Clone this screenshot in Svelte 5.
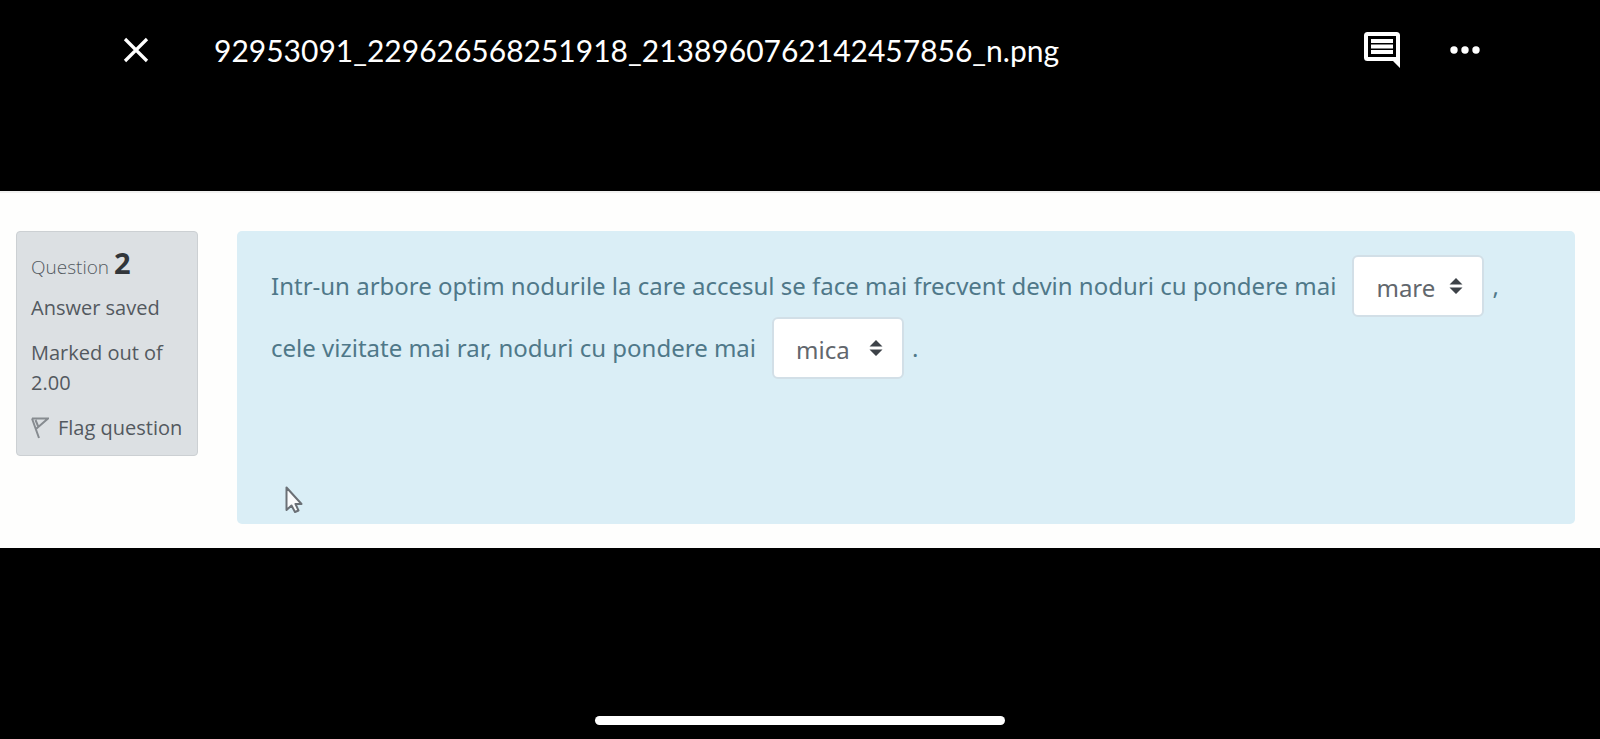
<script>
  let first = $state('mare');
  let second = $state('mica');
  const choices = ['mare', 'mica'];
  const fileName = '92953091_229626568251918_2138960762142457856_n.png';
</script>

{#snippet arrows()}
  <svg class="arrows" viewBox="0 0 14 18" aria-hidden="true">
    <path d="M0.5 7.500 7 1l6.500 6.500zM0.500 10.500h13L7 17z" fill="#3d4248" />
  </svg>
{/snippet}

<div class="viewer">
  <header>
    <button type="button" class="icon" aria-label="Close">
      <svg width="28" height="28" viewBox="0 0 28 28">
        <path d="M3 3l22 22M25 3L3 25" stroke="#fff" stroke-width="3.200" fill="none" />
      </svg>
    </button>
    <h1>{fileName}</h1>
    <button type="button" class="icon" aria-label="Comments">
      <svg width="36" height="36" viewBox="0 0 36 36" fill="#fff">
        <path fill-rule="evenodd" d="M3.500 0h29A3.500 3.500 0 0 1 36 3.500V36l-7-7H3.500A3.500 3.500 0 0 1 0 25.500v-22A3.500 3.500 0 0 1 3.500 0zM4 4v21h28V4z" />
        <path d="M7 7h22v4H7zM7 12.500h22v4H7zM7 18h22v4H7z" />
      </svg>
    </button>
    <button type="button" class="icon" aria-label="More options">
      <svg width="30" height="8" viewBox="0 0 30 8" fill="#fff">
        <circle cx="4" cy="4" r="3.700" /><circle cx="15" cy="4" r="3.700" /><circle cx="26" cy="4" r="3.700" />
      </svg>
    </button>
  </header>

  <main>
    <aside>
      <h2>Question <b>2</b></h2>
      <p>Answer saved</p>
      <p>Marked out of 2.00</p>
      <button type="button" class="flag">
        <svg width="18" height="22" viewBox="0 0 18 22" fill="none" stroke="#868b90" stroke-width="2">
          <path d="M1 1.500h16L5.500 11.500M1 1.500l7 19.500M4.500 3l2.500 6" />
        </svg>
        Flag question
      </button>
    </aside>

    <section>
      <p>
        <span>Intr-un arbore optim nodurile la care accesul se face mai frecvent devin noduri cu pondere mai</span>
        <span class="pick">
          <select bind:value={first} aria-label="Blank 1">
            {#each choices as c}<option>{c}</option>{/each}
          </select>
          {@render arrows()}
        </span>
        <span>,</span>
      </p>
      <p>
        <span>cele vizitate mai rar, noduri cu pondere mai</span>
        <span class="pick">
          <select bind:value={second} aria-label="Blank 2">
            {#each choices as c}<option>{c}</option>{/each}
          </select>
          {@render arrows()}
        </span>
        <span>.</span>
      </p>
      <svg class="pointer" width="18" height="28" viewBox="0 0 18 28" aria-hidden="true">
        <path d="M1.500 1.500v22.500l5-4.500 3.500 6.500 3.500-1.500-3-6.500h6z" fill="#fafbfc" stroke="#6b7076" stroke-width="2" stroke-linejoin="round" />
      </svg>
    </section>
  </main>

  <div class="home"></div>
</div>

<style>
  :global(body) {
    margin: 0;
    background: #000;
  }
  .viewer {
    display: flex;
    flex-direction: column;
    min-height: 100vh;
    font-family: 'Open Sans', 'Noto Sans', sans-serif;
  }
  header {
    display: flex;
    align-items: center;
    height: 100px;
    padding: 0 120px 0 122px;
    margin-bottom: 91px;
  }
  button {
    padding: 0;
    border: 0;
    background: none;
    font: inherit;
    color: inherit;
  }
  .icon {
    display: flex;
  }
  .icon + .icon {
    margin-left: 50px;
  }
  h1 {
    flex: 1;
    margin: 0 0 0 64px;
    font: 400 30px/40px Lato, sans-serif;
    color: #fff;
  }
  main {
    display: flex;
    align-items: flex-start;
    gap: 39px;
    padding: 38px 25px 24px 16px;
    border-top: 2px solid #f1f1f0;
    background: #fefefd;
  }
  aside {
    box-sizing: border-box;
    flex: none;
    width: 182px;
    padding: 16px 14px 12px;
    border: 1px solid #ccd0d3;
    border-radius: 4px;
    background: #dce0e3;
    font-size: 20px;
    line-height: 30px;
    color: #53595f;
  }
  h2 {
    margin: 0 0 8px;
    font-size: 19px;
    font-weight: 300;
    line-height: 36px;
  }
  h2 b {
    font-size: 29px;
    line-height: 30px;
    font-weight: 700;
    color: #32363a;
  }
  aside p {
    margin: 0 0 15px;
  }
  .flag {
    display: flex;
    align-items: center;
    gap: 9px;
    white-space: nowrap;
  }
  section {
    position: relative;
    flex: 1;
    padding: 24px 34px 145px;
    border-radius: 5px;
    background: #daeef6;
    color: #4f7889;
  }
  section p {
    display: flex;
    align-items: center;
    gap: 8px;
    margin: 0;
    font-family: 'Noto Sans', sans-serif;
    font-size: 24px;
    line-height: 62px;
  }
  .pick {
    position: relative;
    display: flex;
    margin-left: 8px;
  }
  select {
    appearance: none;
    box-sizing: border-box;
    width: 132px;
    height: 62px;
    padding: 0 22px 4px;
    border: 2px solid #d2dfe7;
    border-radius: 6px;
    background: #fff;
    color: #62676d;
    font: inherit;
  }
  .arrows {
    position: absolute;
    right: 21px;
    top: 22px;
    width: 14px;
    height: 18px;
    pointer-events: none;
  }
  .pointer {
    position: absolute;
    left: 48px;
    bottom: 10px;
  }
  .home {
    width: 26%;
    max-width: 410px;
    height: 9px;
    margin: auto auto 14px;
    border-radius: 5px;
    background: #fff;
  }
</style>
